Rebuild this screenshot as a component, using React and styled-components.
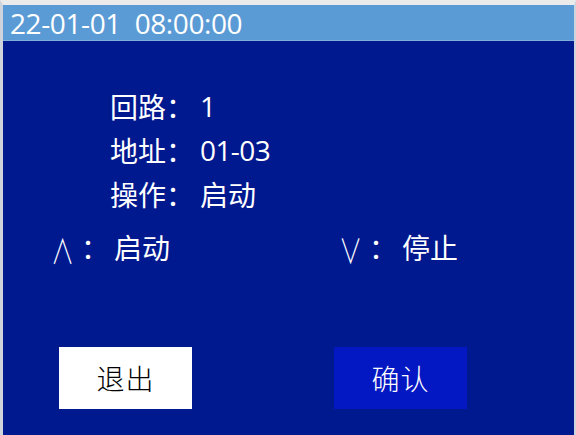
import React from "react";
import styled, { createGlobalStyle } from "styled-components";

const GlobalStyle = createGlobalStyle`
  html, body {
    margin: 0;
    padding: 0;
    background: #ffffff;
  }
  * {
    box-sizing: border-box;
  }
`;

const cjk = `"Noto Sans CJK SC", "Noto Sans", sans-serif`;

const Screen = styled.div`
  width: 576px;
  height: 435px;
  display: flex;
  flex-direction: column;
  border-top: 5px solid #ebebeb;
  border-left: 3px solid #cfd3dc;
  border-right: 2px solid #cfd3dc;
  background-color: #01198f;
  font-family: ${cjk};
  color: #ffffff;
  overflow: hidden;
`;

const Header = styled.div`
  height: 36px;
  display: flex;
  align-items: center;
  padding-left: 7px;
  background-color: #5b9bd5;
  border-bottom: 1px solid #7fb0de;
  font-family: "Open Sans", "Liberation Sans", sans-serif;
  font-size: 28px;
  letter-spacing: -0.4px;
  white-space: pre;
`;

const Body = styled.div`
  flex: 1;
  display: flex;
  flex-direction: column;
  padding-top: 43px;
`;

const InfoList = styled.div`
  display: flex;
  flex-direction: column;
  padding-left: 107px;
`;

const InfoRow = styled.div`
  height: 44px;
  display: flex;
  align-items: center;
  font-size: 28px;
`;

const Label = styled.span`
  width: 90px;
  font-weight: 400;
`;

const Value = styled.span`
  font-family: "Open Sans", ${cjk};
  font-size: 28px;
  letter-spacing: ${(p) => (p.$cjk ? "0" : "-0.6px")};
`;

const KeyRow = styled.div`
  margin-top: 9px;
  height: 44px;
  display: grid;
  grid-template-columns: 288px auto;
  align-items: center;
  padding-left: 48px;
  font-size: 28px;
`;

const KeyHint = styled.div`
  display: flex;
  align-items: center;
`;

const KeyGlyph = styled.span`
  width: 30px;
  font-family: ${cjk};
  font-weight: 300;
  font-size: 34px;
  line-height: 1;
  padding-top: 6px;
  transform: scaleX(0.68);
  transform-origin: left center;
`;

const Colon = styled.span`
  width: 33px;
`;

const ButtonRow = styled.div`
  margin-top: auto;
  margin-bottom: 26px;
  display: flex;
  gap: 142px;
  padding-left: 56px;
`;

const Button = styled.div`
  width: 133px;
  height: 62px;
  display: flex;
  align-items: center;
  justify-content: center;
  font-size: 28px;
  font-weight: 300;
  letter-spacing: 1px;
  background-color: ${(p) => (p.$primary ? "#0317c2" : "#ffffff")};
  color: ${(p) => (p.$primary ? "#ffffff" : "#000000")};
`;

export default function App() {
  return (
    <>
      <GlobalStyle />
      <Screen>
        <Header>22-01-01  08:00:00</Header>
        <Body>
          <InfoList>
            <InfoRow>
              <Label>回路：</Label>
              <Value>1</Value>
            </InfoRow>
            <InfoRow>
              <Label>地址：</Label>
              <Value>01-03</Value>
            </InfoRow>
            <InfoRow>
              <Label>操作：</Label>
              <Value $cjk>启动</Value>
            </InfoRow>
          </InfoList>
          <KeyRow>
            <KeyHint>
              <KeyGlyph>∧</KeyGlyph>
              <Colon>：</Colon>
              <span>启动</span>
            </KeyHint>
            <KeyHint>
              <KeyGlyph>∨</KeyGlyph>
              <Colon>：</Colon>
              <span>停止</span>
            </KeyHint>
          </KeyRow>
          <ButtonRow>
            <Button>退出</Button>
            <Button $primary>确认</Button>
          </ButtonRow>
        </Body>
      </Screen>
    </>
  );
}
